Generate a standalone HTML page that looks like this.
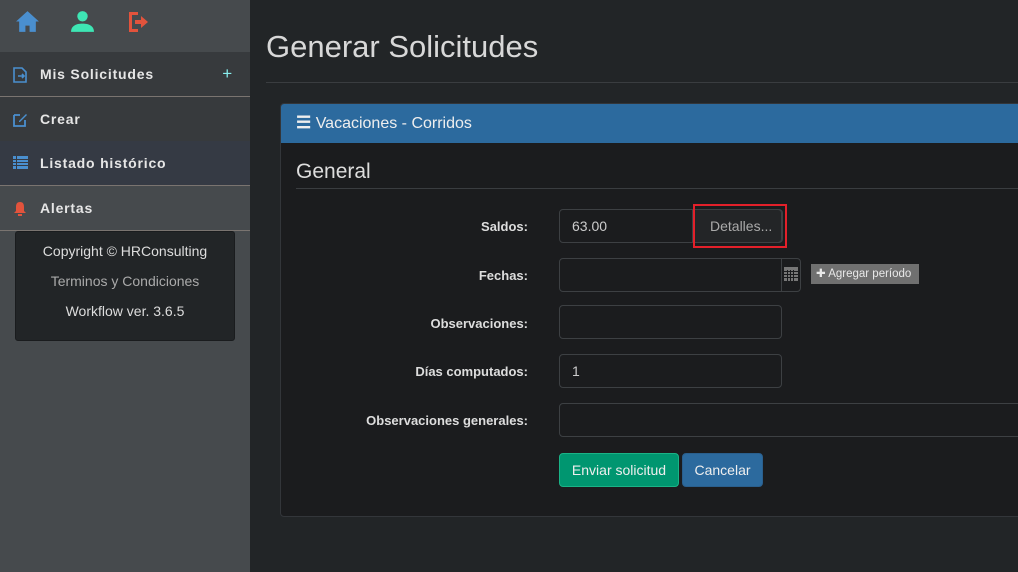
<!DOCTYPE html>
<html><head><meta charset="utf-8"><style>
*{box-sizing:border-box;margin:0;padding:0}
body{width:1018px;height:572px;overflow:hidden;background:#222527;font-family:"Liberation Sans",sans-serif;position:relative}
.side{position:absolute;left:0;top:0;width:250px;height:572px;background:#464a4d}
.top{height:52px;position:relative}
.item{position:absolute;left:0;width:250px;height:44px;color:#e6e6e6;font-size:14px;font-weight:bold;letter-spacing:.8px;line-height:44px;padding-left:40px}
.item svg{position:absolute;left:13px;top:15px}
.sep{position:absolute;left:0;width:250px;height:1px;background:#7a7470}
.foot{position:absolute;left:15px;top:231px;width:220px;height:110px;background:#222527;border:1px solid #1a1c1e;border-radius:3px;text-align:center;font-size:14px;color:#ddd}
.foot div{position:absolute;left:0;width:100%}
.main{position:absolute;left:250px;top:0;right:0;bottom:0}
h1{position:absolute;left:16px;top:29px;font-weight:normal;font-size:31px;color:#d8d8d8}
.hr{position:absolute;left:16px;right:0;top:82px;height:1px;background:#3a3d40}
.panel{position:absolute;left:30px;top:103px;width:760px;height:414px;background:#1b1c1e;border:1px solid #33363a;border-radius:4px;overflow:hidden}
.ph{height:39px;background:#2c6a9e;color:#eee;font-size:16px;line-height:38px;padding-left:15px}
.gen{position:absolute;left:15px;top:56px;font-size:21px;color:#ddd}
.ghr{position:absolute;left:15px;right:0;top:84px;height:1px;background:#3a3d40}
.lbl{position:absolute;right:511px;font-size:13px;font-weight:bold;color:#ddd;text-align:right;white-space:nowrap}
.inp{position:absolute;left:278px;height:34px;border:1px solid #3d4043;border-radius:4px;background:#1b1c1e;color:#ccc;font-size:14px;line-height:32px;padding-left:12px}
.btn{position:absolute;top:349px;height:34px;border-radius:4px;color:#eee;font-size:14px;line-height:32px;text-align:center}
</style></head><body>
<div class="side">
 <div class="top">
  <svg style="position:absolute;left:15px;top:10px" width="25" height="23" viewBox="0 0 24 22"><path d="M12 1L1 11h3v10h6v-6h4v6h6V11h3z" fill="#4a8fcf"/></svg>
  <svg style="position:absolute;left:70px;top:10px" width="25" height="23" viewBox="0 0 24 22"><circle cx="12" cy="6" r="5" fill="#3ee6b4"/><path d="M1 21c0-6 5-8 11-8s11 2 11 8z" fill="#3ee6b4"/></svg>
  <svg style="position:absolute;left:127px;top:10px" width="22" height="24" viewBox="0 0 22 24"><path d="M2 2h9v3H5v14h6v3H2z" fill="#e2533c"/><path d="M8 10h6V6l7 6-7 6v-4H8z" fill="#e2533c"/></svg>
 </div>
 <div class="item" style="top:52px;background:#373a3d">Mis Solicitudes<span style="position:absolute;right:17px;font-weight:normal;color:#8ee;font-size:17px">+</span>
  <svg width="14" height="16" viewBox="0 0 14 16"><path d="M1 1h8l4 4v10H1z" fill="none" stroke="#4a8fcf" stroke-width="1.6"/><path d="M5 9h6M9 7l2 2-2 2" stroke="#4a8fcf" stroke-width="1.6" fill="none"/></svg></div>
 <div class="sep" style="top:96px"></div>
 <div class="item" style="top:97px;background:#373a3d">Crear
  <svg width="15" height="15" viewBox="0 0 15 15"><path d="M1 3h6M1 3v11h11V8" fill="none" stroke="#4a8fcf" stroke-width="1.8"/><path d="M6 9l7-7 1 1-7 7H6z" fill="#4a8fcf"/></svg></div>
 <div class="item" style="top:141px;background:#353a44">Listado histórico
  <svg width="15" height="14" viewBox="0 0 15 14"><g fill="#4a8fcf"><rect x="0" y="0" width="3" height="3"/><rect x="4" y="0" width="11" height="3"/><rect x="0" y="4" width="3" height="2"/><rect x="4" y="4" width="11" height="2"/><rect x="0" y="7" width="3" height="2"/><rect x="4" y="7" width="11" height="2"/><rect x="0" y="10" width="3" height="3"/><rect x="4" y="10" width="11" height="3"/></g></svg></div>
 <div class="sep" style="top:185px"></div>
 <div class="item" style="top:186px;background:#464a4d">Alertas
  <svg width="14" height="16" viewBox="0 0 14 16"><path d="M7 1c3 0 4 2 4 5v4l2 2H1l2-2V6c0-3 1-5 4-5z" fill="#e2533c"/><rect x="5" y="13" width="4" height="2" fill="#e2533c"/></svg></div>
 <div class="sep" style="top:230px"></div>
 <div class="foot">
  <div style="top:11px">Copyright © HRConsulting</div>
  <div style="top:41px;color:#aaa">Terminos y Condiciones</div>
  <div style="top:71px">Workflow ver. 3.6.5</div>
 </div>
</div>
<div class="main">
 <h1>Generar Solicitudes</h1>
 <div class="hr"></div>
 <div class="panel">
  <div class="ph"><span style="font-size:17px;font-weight:bold">&#9776;</span> Vacaciones - Corridos</div>
  <div class="gen">General</div>
  <div class="ghr"></div>
  <div class="lbl" style="top:115px">Saldos:</div>
  <div class="inp" style="top:105px;width:224px">63.00</div>
  <div class="inp" style="top:105px;left:411px;width:90px;background:#232527;color:#aaa;padding-left:17px;border-radius:0 4px 4px 0">Detalles...</div>
  <div style="position:absolute;left:412px;top:100px;width:94px;height:44px;border:2px solid #e3202a"></div>
  <div class="lbl" style="top:164px">Fechas:</div>
  <div class="inp" style="top:154px;width:242px"></div>
  <div style="position:absolute;left:500px;top:155px;width:1px;height:32px;background:#3d4043"></div>
  <svg style="position:absolute;left:503px;top:163px" width="14" height="14" viewBox="0 0 14 14"><rect x="0" y="0" width="14" height="14" fill="#777"/><g stroke="#1b1c1e" stroke-width="1"><path d="M0 4.5h14M0 7.5h14M0 10.5h14M3.5 3v11M6.5 3v11M9.5 3v11"/></g></svg>
  <div style="position:absolute;left:530px;top:160px;width:108px;height:20px;background:#707070;color:#e8e8e8;font-size:11.5px;line-height:20px;padding-left:5px">✚ Agregar período</div>
  <div class="lbl" style="top:212px">Observaciones:</div>
  <div class="inp" style="top:201px;width:223px"></div>
  <div class="lbl" style="top:260px">Días computados:</div>
  <div class="inp" style="top:250px;width:223px">1</div>
  <div class="lbl" style="top:309px">Observaciones generales:</div>
  <div class="inp" style="top:299px;width:500px"></div>
  <div class="btn" style="left:278px;width:120px;background:#009670;border:1px solid #1ab387">Enviar solicitud</div>
  <div class="btn" style="left:401px;width:81px;background:#2c6a9e;border:1px solid #2a5f8d">Cancelar</div>
 </div>
</div>
</body></html>
